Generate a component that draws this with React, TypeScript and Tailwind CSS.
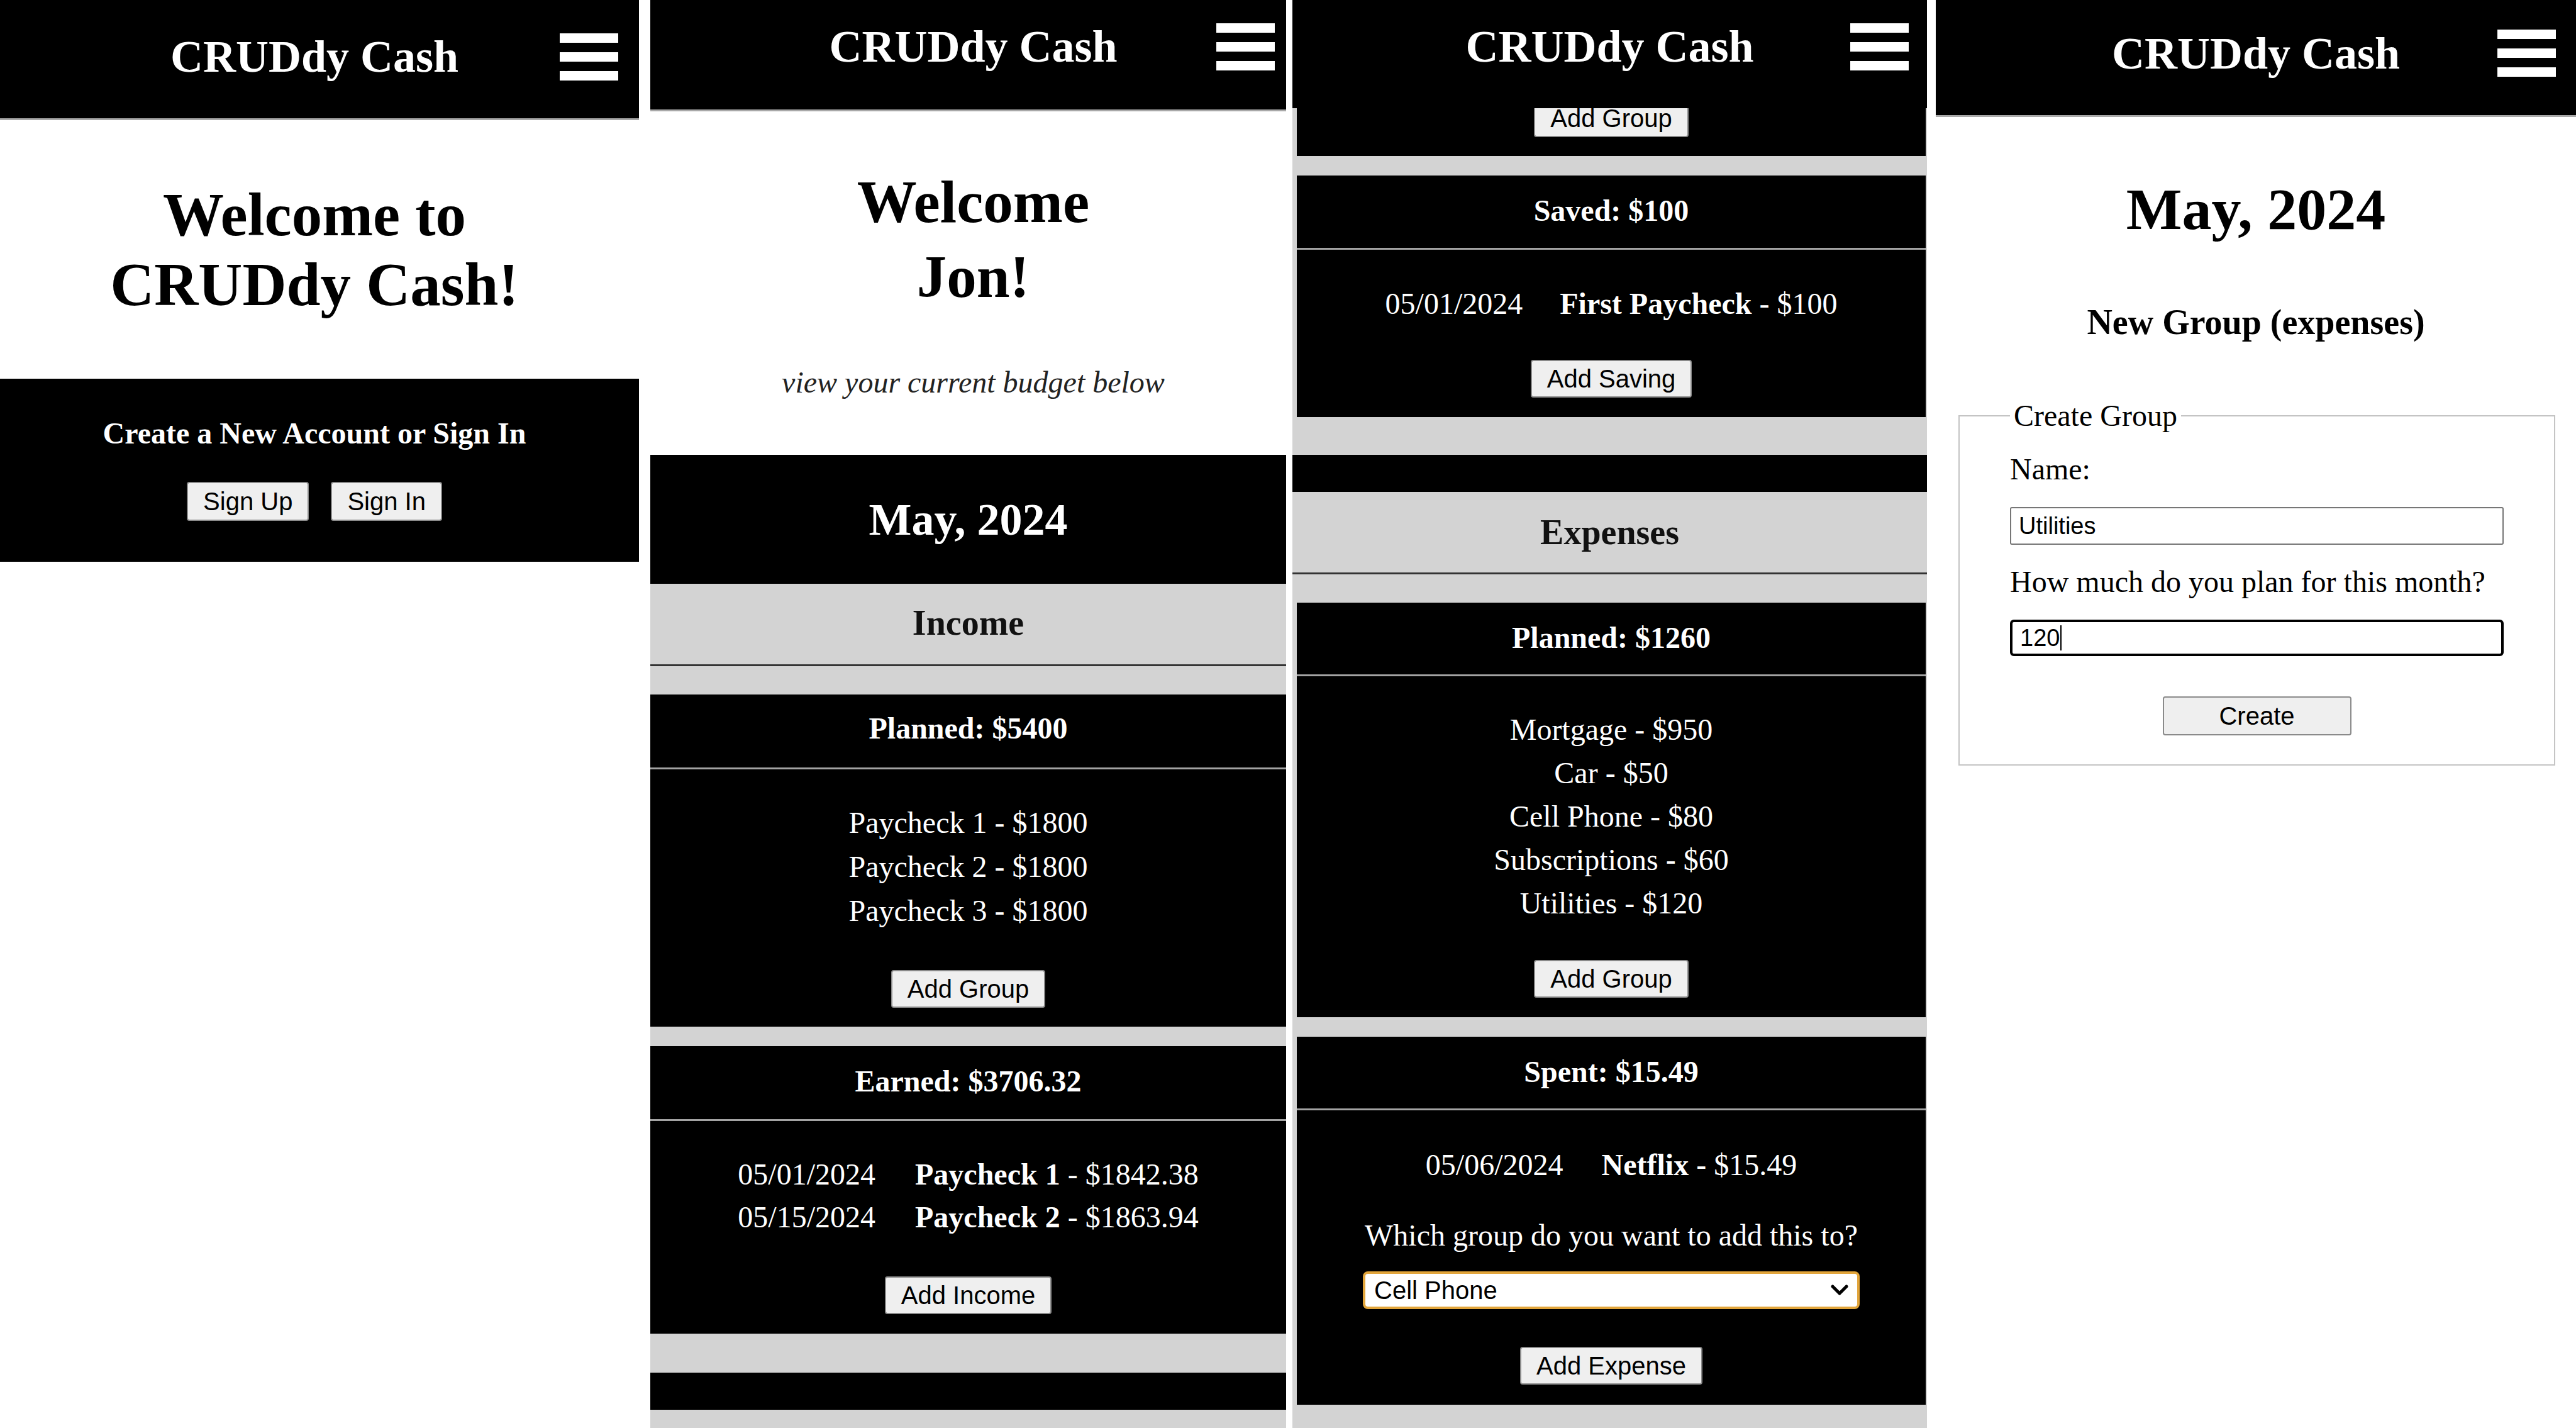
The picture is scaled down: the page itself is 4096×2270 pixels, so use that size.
import React from "react";

const serif = "font-['Liberation_Serif','Times_New_Roman',serif]";
const sans = "font-['Liberation_Sans',Arial,sans-serif]";

function Hamburger() {
  return (
    <div className="flex flex-col gap-[15px]">
      <span className="block h-[15px] w-[93px] bg-white" />
      <span className="block h-[15px] w-[93px] bg-white" />
      <span className="block h-[15px] w-[93px] bg-white" />
    </div>
  );
}

function Header({ className, menu }: { className: string; menu: string }) {
  return (
    <header className={`grid shrink-0 grid-cols-[1fr_auto_1fr] items-center bg-black text-white ${className}`}>
      <span />
      <div className="text-[72px] font-bold leading-none">CRUDdy Cash</div>
      <div className={`justify-self-end ${menu}`}>
        <Hamburger />
      </div>
    </header>
  );
}

function Btn({ children, className = "" }: { children: React.ReactNode; className?: string }) {
  return (
    <button
      className={`h-[60px] rounded-[4px] border-2 border-[#8a8a8a] bg-[#efefef] px-[24px] text-[40px] leading-none text-black ${sans} ${className}`}
    >
      {children}
    </button>
  );
}

function Card({
  title,
  head,
  body,
  className = "",
  children,
}: {
  title: string;
  head: string;
  body: string;
  className?: string;
  children: React.ReactNode;
}) {
  return (
    <section className={`shrink-0 bg-black text-white ${className}`}>
      <div className={`flex items-center justify-center border-b-[3px] border-[#a3a3a3] text-[48px] font-bold leading-none ${head}`}>
        {title}
      </div>
      <div className={`flex flex-col items-center ${body}`}>{children}</div>
    </section>
  );
}

function Category({ label, className = "" }: { label: string; className?: string }) {
  return (
    <div
      className={`mb-[45px] flex h-[131px] shrink-0 items-center justify-center border-b-[3px] border-[#333] text-[56px] font-bold leading-none text-[#111] ${className}`}
    >
      {label}
    </div>
  );
}

function Panel1() {
  return (
    <div className={`flex h-full w-[1016px] shrink-0 flex-col bg-white ${serif}`}>
      <Header className="h-[191px] border-b-[3px] border-[#a9a9a9] pb-[8px] pr-[16px]" menu="mr-[17px]" />
      <div className="flex h-[411px] flex-col items-center justify-center pr-[16px] text-[97px] font-bold leading-[111px] text-black">
        <div>Welcome to</div>
        <div>CRUDdy Cash!</div>
      </div>
      <div className="flex h-[291px] flex-col items-center bg-black pr-[16px] pt-[59px] text-white">
        <div className="text-[48px] font-bold leading-[56px]">Create a New Account or Sign In</div>
        <div className="mt-[49px] flex gap-[35px]">
          <Btn className="h-[62px]">Sign Up</Btn>
          <Btn className="h-[62px]">Sign In</Btn>
        </div>
      </div>
    </div>
  );
}

function Panel2() {
  return (
    <div className={`ml-[18px] flex h-full w-[1011px] shrink-0 flex-col bg-[#d3d3d3] ${serif}`}>
      <Header className="h-[177px] border-b-[3px] border-[#a9a9a9] pb-[26px] pl-[16px]" menu="mr-[18px]" />
      <div className="flex h-[546px] shrink-0 flex-col items-center bg-white pl-[16px] pt-[85px] text-black">
        <div className="text-center text-[95px] font-bold leading-[119px]">
          Welcome
          <br />
          Jon!
        </div>
        <div className="mt-[80px] text-[48px] italic leading-[56px] text-[#222]">view your current budget below</div>
      </div>
      <div className="flex h-[205px] shrink-0 items-center justify-center bg-black text-[72px] font-bold leading-none text-white">
        May, 2024
      </div>
      <Category label="Income" className="pb-[4px]" />
      <Card title="Planned: $5400" head="h-[119px] pb-[8px]" body="pb-[30px] pt-[50px]">
        <div className="text-center text-[48px] leading-[70px]">
          <div>Paycheck 1 - $1800</div>
          <div>Paycheck 2 - $1800</div>
          <div>Paycheck 3 - $1800</div>
        </div>
        <Btn className="mt-[59px]">Add Group</Btn>
      </Card>
      <Card title="Earned: $3706.32" className="mt-[31px]" head="h-[119px] pb-[4px]" body="pb-[31px] pt-[51px]">
        <div className="text-[48px] leading-[68px]">
          <div>
            <span className="mr-[63px]">05/01/2024</span>
            <b>Paycheck 1</b> - $1842.38
          </div>
          <div>
            <span className="mr-[63px]">05/15/2024</span>
            <b>Paycheck 2</b> - $1863.94
          </div>
        </div>
        <Btn className="mt-[60px]">Add Income</Btn>
      </Card>
      <div className="mt-[62px] h-[59px] shrink-0 bg-black" />
    </div>
  );
}

function Panel3() {
  return (
    <div className={`ml-[10px] flex h-full w-[1009px] shrink-0 flex-col bg-[#d3d3d3] ${serif}`}>
      <Header className="h-[172px] pb-[24px]" menu="mr-[29px]" />
      {/* content scrolled under the header: button is partly hidden */}
      <div className="ml-[7px] mr-[2px] flex h-[76px] shrink-0 justify-center overflow-hidden bg-black">
        <Btn className="-mt-[14px]">Add Group</Btn>
      </div>
      <Card title="Saved: $100" className="ml-[7px] mr-[2px] mt-[31px]" head="h-[118px] pb-[3px]" body="pb-[31px] pt-[52px]">
        <div className="text-[48px] leading-[68px]">
          <span className="mr-[59px]">05/01/2024</span>
          <b>First Paycheck</b> - $100
        </div>
        <Btn className="mt-[55px]">Add Saving</Btn>
      </Card>
      <div className="mt-[60px] h-[59px] shrink-0 bg-black" />
      <Category label="Expenses" />
      <Card title="Planned: $1260" className="ml-[7px] mr-[2px]" head="h-[117px] pb-[2px]" body="pb-[31px] pt-[50px]">
        <div className="text-center text-[48px] leading-[69px]">
          <div>Mortgage - $950</div>
          <div>Car - $50</div>
          <div>Cell Phone - $80</div>
          <div>Subscriptions - $60</div>
          <div>Utilities - $120</div>
        </div>
        <Btn className="mt-[56px]">Add Group</Btn>
      </Card>
      <Card title="Spent: $15.49" className="ml-[7px] mr-[2px] mt-[31px]" head="h-[117px] pb-[2px]" body="pb-[32px] pt-[53px]">
        <div className="text-[48px] leading-[68px]">
          <span className="mr-[61px]">05/06/2024</span>
          <b>Netflix</b> - $15.49
        </div>
        <div className="mt-[44px] text-[48px] leading-[68px]">Which group do you want to add this to?</div>
        <div className="relative mt-[23px] w-[790px]">
          <select
            defaultValue="Cell Phone"
            className={`block h-[60px] w-full appearance-none rounded-[8px] border-[4px] border-[#e2a53b] bg-white pl-[14px] text-[40px] leading-none text-black ${sans}`}
          >
            <option>Mortgage</option>
            <option>Car</option>
            <option>Cell Phone</option>
            <option>Subscriptions</option>
            <option>Utilities</option>
          </select>
          <svg
            className="pointer-events-none absolute right-[18px] top-1/2 h-[18px] w-[28px] -translate-y-1/2"
            viewBox="0 0 28 18"
            fill="none"
          >
            <polyline points="3,3 14,14 25,3" stroke="#000" strokeWidth="5" strokeLinecap="round" strokeLinejoin="round" />
          </svg>
        </div>
        <Btn className="mt-[60px]">Add Expense</Btn>
      </Card>
    </div>
  );
}

function Panel4() {
  return (
    <div className={`ml-[14px] flex h-full w-[1018px] shrink-0 flex-col bg-white text-black ${serif}`}>
      <Header className="h-[186px] border-b-[3px] border-[#a9a9a9] pb-[14px]" menu="mr-[32px]" />
      <div className="mt-[91px] text-center text-[94px] font-bold leading-[110px]">May, 2024</div>
      <div className="mt-[93px] text-center text-[56px] font-bold leading-[64px]">New Group (expenses)</div>
      <fieldset className="ml-[36px] mr-[33px] mt-[89px] border-2 border-[#c4c4c4] px-[80px] pb-[46px]">
        <legend className="px-[6px] text-[48px] leading-[56px]">Create Group</legend>
        <div className="mt-[29px] text-[48px] leading-[56px]">Name:</div>
        <input
          defaultValue="Utilities"
          className={`mt-[32px] block h-[60px] w-full rounded-[3px] border-2 border-[#767676] bg-white px-[12px] text-[38px] text-black ${sans}`}
        />
        <div className="mt-[31px] text-[48px] leading-[56px]">How much do you plan for this month?</div>
        <div className="relative mt-[32px]">
          <input
            defaultValue="120"
            className={`block h-[58px] w-full rounded-[6px] border-[4px] border-black bg-white px-[12px] text-[38px] text-black ${sans}`}
          />
          {/* text caret */}
          <span className="pointer-events-none absolute left-[80px] top-[9px] h-[40px] w-[2px] bg-black" />
        </div>
        <Btn className="mx-auto mt-[64px] block h-[62px] w-[300px]">Create</Btn>
      </fieldset>
    </div>
  );
}

export default function App() {
  return (
    <div className="flex h-[2270px] w-[4096px] overflow-hidden bg-white">
      <Panel1 />
      <Panel2 />
      <Panel3 />
      <Panel4 />
    </div>
  );
}
